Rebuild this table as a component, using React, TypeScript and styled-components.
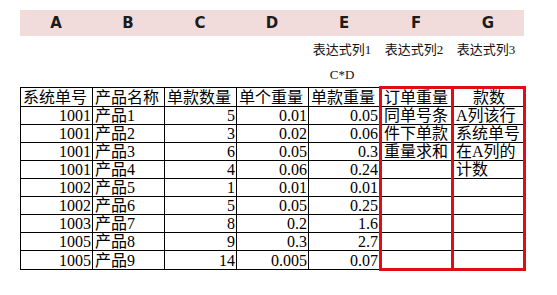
import styled, { createGlobalStyle } from "styled-components";

const GlobalStyle = createGlobalStyle`
  body {
    margin: 0;
    background: #ffffff;
    font-family: "Liberation Serif", "Noto Sans CJK SC", serif;
  }
`;

const letters = ["A", "B", "C", "D", "E", "F", "G"];

type Row = [string, string, string, string, string, string, string];

const rows: Row[] = [
  ["1001", "产品1", "5", "0.01", "0.05", "同单号条", "A列该行"],
  ["1001", "产品2", "3", "0.02", "0.06", "件下单款", "系统单号"],
  ["1001", "产品3", "6", "0.05", "0.3", "重量求和", "在A列的"],
  ["1001", "产品4", "4", "0.06", "0.24", "", "计数"],
  ["1002", "产品5", "1", "0.01", "0.01", "", ""],
  ["1002", "产品6", "5", "0.05", "0.25", "", ""],
  ["1003", "产品7", "8", "0.2", "1.6", "", ""],
  ["1005", "产品8", "9", "0.3", "2.7", "", ""],
  ["1005", "产品9", "14", "0.005", "0.07", "", ""],
];

const headers = ["系统单号", "产品名称", "单款数量", "单个重量", "单款重量", "订单重量", "款数"];

export default function App(): JSX.Element {
  return (
    <>
      <GlobalStyle />
      <Sheet>
        <LetterBar>
          {letters.map((l) => (
            <Letter key={l}>{l}</Letter>
          ))}
        </LetterBar>

        <NoteRow>
          <span />
          <span />
          <span />
          <span />
          <Note>表达式列1</Note>
          <Note>表达式列2</Note>
          <Note>表达式列3</Note>
        </NoteRow>
        <NoteRow $gap={5}>
          <span />
          <span />
          <span />
          <span />
          <Note>C*D</Note>
        </NoteRow>

        <Table>
          <colgroup>
            {letters.map((l) => (
              <col key={l} width={72} />
            ))}
          </colgroup>
          <tbody>
            <tr>
              {headers.map((h, i) => (
                <Cell
                  key={h}
                  $mark={i >= 5}
                  $top={i >= 5}
                  $align={i === 6 ? "center" : "left"}
                >
                  {h}
                </Cell>
              ))}
            </tr>
            {rows.map((r, ri) => (
              <tr key={ri}>
                {r.map((v, i) => (
                  <Cell
                    key={i}
                    $mark={i >= 5}
                    $bottom={i >= 5 && ri === rows.length - 1}
                    $align={i === 0 || (i >= 2 && i <= 4) ? "right" : "left"}
                  >
                    {v}
                  </Cell>
                ))}
              </tr>
            ))}
          </tbody>
        </Table>
      </Sheet>
    </>
  );
}

/* ---------- styles ---------- */

const Sheet = styled.div`
  padding: 10px 0 0 20px;
`;

const LetterBar = styled.div`
  display: grid;
  grid-template-columns: repeat(7, 72px);
  width: 504px;
  height: 26px;
  background: #f2dcdb;
`;

const Letter = styled.div`
  display: flex;
  align-items: center;
  justify-content: center;
  font-family: "DejaVu Sans", Verdana, sans-serif;
  font-weight: bold;
  font-size: 15px;
  color: #1c1c1c;
`;

const NoteRow = styled.div<{ $gap?: number }>`
  display: grid;
  grid-template-columns: repeat(7, 72px);
  height: 20px;
  margin-top: ${(p) => p.$gap ?? 4}px;
`;

const Note = styled.div`
  text-align: center;
  font-size: 13px;
  line-height: 20px;
  color: #111;
  padding-right: 4px;
`;

const Table = styled.table`
  border-collapse: collapse;
  table-layout: fixed;
  width: 504px;
  margin-top: 1px;
`;

const Cell = styled.td<{
  $mark?: boolean;
  $top?: boolean;
  $bottom?: boolean;
  $align: "left" | "right" | "center";
}>`
  height: 17px;
  padding: 0 1px 0 2px;
  border: 1px solid #000;
  font-size: 16px;
  line-height: 17px;
  color: #000;
  white-space: nowrap;
  overflow: hidden;
  text-align: ${(p) => p.$align};
  ${(p) => p.$mark && "border-left: 3px solid #e00e14; border-right: 3px solid #e00e14;"}
  ${(p) => p.$top && "border-top: 3px solid #e00e14;"}
  ${(p) => p.$bottom && "border-bottom: 3px solid #e00e14;"}
`;
